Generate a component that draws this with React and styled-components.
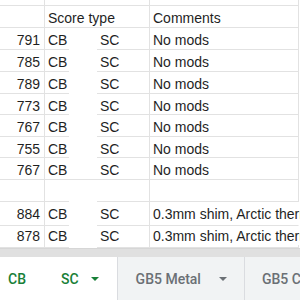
import React from 'react';
import styled, { createGlobalStyle } from 'styled-components';

const GlobalStyle = createGlobalStyle`
  html, body {
    margin: 0;
    padding: 0;
    background: #fff;
    overflow: hidden;
  }
  * {
    box-sizing: border-box;
  }
`;

const Page = styled.div`
  width: 300px;
  height: 300px;
  display: flex;
  flex-direction: column;
  overflow: hidden;
  font-family: 'Liberation Sans', Arial, sans-serif;
  font-size: 14px;
  color: #1f1f1f;
`;

const Grid = styled.div`
  display: flex;
  flex-direction: column;
  overflow: hidden;
`;

const Row = styled.div`
  display: grid;
  grid-template-columns: 45px 105px 149px;
  height: ${(p) => p.$h + 1}px;
  white-space: nowrap;
`;

const Cell = styled.div`
  line-height: 21px;
  padding-top: ${(p) => (p.$h > 6 ? 2 : 0)}px;
  border-bottom: 1px solid #e2e2e2;
  border-right: 1px solid ${(p) => (p.$noRight ? 'transparent' : '#e2e2e2')};
  overflow: ${(p) => (p.$spill ? 'visible' : 'hidden')};
`;

const NumCell = styled(Cell)`
  text-align: right;
  padding-right: 4px;
`;

const TypeCell = styled(Cell)`
  display: flex;
  padding-left: 3px;
  border-bottom: 0;
  background: ${(p) =>
    p.$gap
      ? 'linear-gradient(to right, #e2e2e2 24px, transparent 24px, transparent 52px, #e2e2e2 52px) bottom / 100% 1px no-repeat'
      : 'linear-gradient(#e2e2e2, #e2e2e2) bottom / 100% 1px no-repeat'};
`;

const TypeLabel = styled.span`
  width: 52px;
`;

const CommentCell = styled(Cell)`
  padding-left: 3px;
`;

const Scrollbar = styled.div`
  height: 9px;
  background: #e0e0e0;
  border-top: 1px solid #d6d6d6;
`;

const TabBar = styled.div`
  flex: 1;
  display: flex;
  background: #f1f3f4;
  font-family: Roboto, 'Liberation Sans', sans-serif;
  font-weight: 500;
  font-size: 14px;
`;

const Tab = styled.div`
  display: flex;
  align-items: center;
  gap: ${(p) => p.$gap || 11}px;
  padding: 0 ${(p) => p.$pr}px 0 ${(p) => p.$pl}px;
  background: ${(p) => (p.$active ? '#fff' : 'transparent')};
  color: ${(p) => (p.$active ? '#188038' : '#6b7075')};
  border-right: 1px solid ${(p) => (p.$sep ? '#dadce0' : 'transparent')};
  white-space: nowrap;
`;

const Caret = styled.span`
  width: 0;
  height: 0;
  border-left: 4px solid transparent;
  border-right: 4px solid transparent;
  border-top: 4px solid currentColor;
  margin-top: 1px;
`;

const rows = [
  { h: 21, n: '', t: ['Score type', ''], c: 'Comments', gap: false },
  { h: 21, n: '791', t: ['CB', 'SC'], c: 'No mods', gap: true },
  { h: 21, n: '785', t: ['CB', 'SC'], c: 'No mods', gap: true },
  { h: 21, n: '789', t: ['CB', 'SC'], c: 'No mods', gap: true },
  { h: 20, n: '773', t: ['CB', 'SC'], c: 'No mods', gap: true },
  { h: 21, n: '767', t: ['CB', 'SC'], c: 'No mods', gap: true },
  { h: 20, n: '755', t: ['CB', 'SC'], c: 'No mods', gap: true },
  { h: 21, n: '767', t: ['CB', 'SC'], c: 'No mods', gap: false },
  { h: 21, n: '', t: ['', ''], c: '', gap: true },
  { h: 21, n: '884', t: ['CB', 'SC'], c: '0.3mm shim, Arctic thermal pad', gap: true, spill: true },
  { h: 20, n: '878', t: ['CB', 'SC'], c: '0.3mm shim, Arctic thermal pad', gap: true, spill: true },
  { h: 3, n: '', t: ['', ''], c: '', gap: false, last: true },
];

function SheetRow({ row }) {
  const noBottom = row.last ? { borderBottom: 0 } : null;
  return (
    <Row $h={row.last ? 2 : row.h}>
      <NumCell $h={row.h} style={noBottom}>{row.n}</NumCell>
      <TypeCell $h={row.h} $gap={row.gap} style={row.last ? { background: 'none' } : null}>
        <TypeLabel>{row.t[0]}</TypeLabel>
        <span>{row.t[1]}</span>
      </TypeCell>
      <CommentCell $h={row.h} $spill={row.spill} $noRight={row.spill} style={noBottom}>
        {row.c}
      </CommentCell>
    </Row>
  );
}

export default function App() {
  return (
    <>
      <GlobalStyle />
      <Page>
        <Grid>
          <Row $h={5}>
            <NumCell $h={5} />
            <TypeCell $h={5} />
            <CommentCell $h={5} />
          </Row>
          {rows.map((r, i) => (
            <SheetRow key={i} row={r} />
          ))}
        </Grid>
        <Scrollbar />
        <TabBar>
          <Tab $active $pl={8} $pr={34}>CB</Tab>
          <Tab $active $pl={0} $pr={18} $gap={12} $sep>
            SC <Caret />
          </Tab>
          <Tab $pl={18} $pr={17} $gap={18} $sep>
            GB5 Metal <Caret />
          </Tab>
          <Tab $pl={17} $pr={17}>GB5 Compute</Tab>
        </TabBar>
      </Page>
    </>
  );
}
